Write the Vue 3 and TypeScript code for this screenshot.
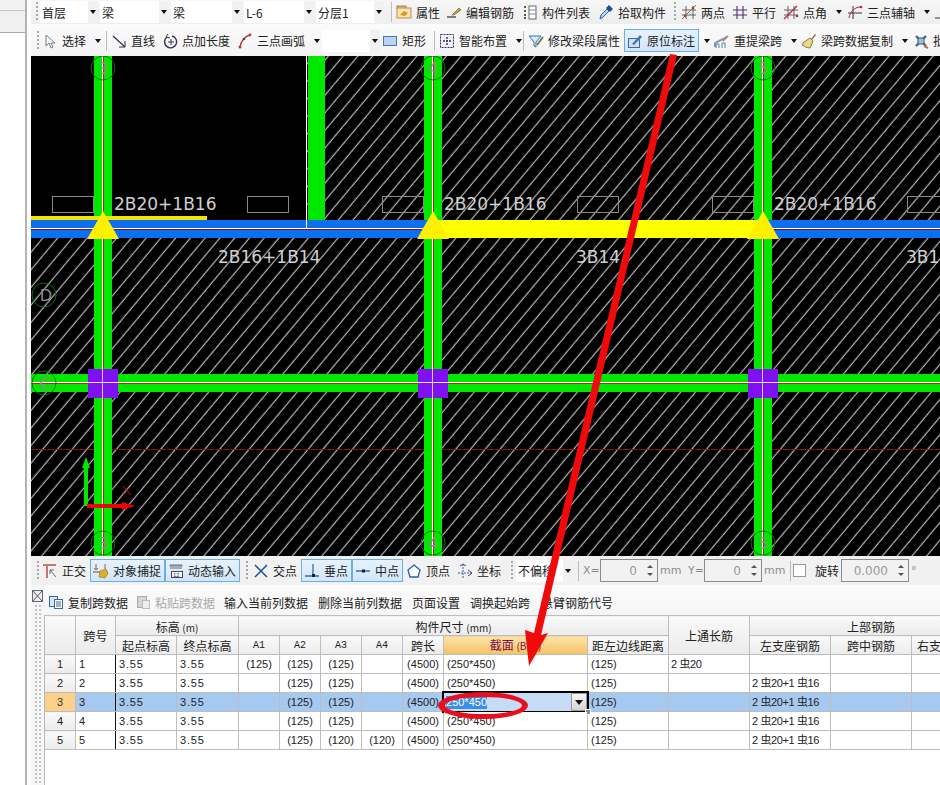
<script setup lang="ts">
// toolbar items are laid out in flow, w is the slot width of each item
interface BarItem {
  t: 'tool' | 'grip' | 'sep' | 'combo' | 'gap' | 'arrow' | 'text' | 'spin' | 'check'
  w: number
  icon?: string
  label?: string
  arrow?: boolean
  active?: boolean
  dark?: boolean
}

const tool = (w: number, icon: string, label: string, arrow = false, active = false): BarItem => ({ t: 'tool', w, icon, label, arrow, active })
const grip = (w: number): BarItem => ({ t: 'grip', w })
const sep = (w: number): BarItem => ({ t: 'sep', w })
const combo = (w: number, label = ''): BarItem => ({ t: 'combo', w, label })

const topBar: BarItem[] = [
  grip(7), combo(58, '首层'), combo(69, '梁'), combo(71, '梁'), combo(70, 'L-6'), combo(68, '分层1'), sep(10),
  tool(50, 'attr', '属性'), tool(76, 'edit', '编辑钢筋'), tool(76, 'list', '构件列表'), tool(70, 'pick', '拾取构件'),
  grip(13), tool(51, 'two', '两点'), tool(51, 'par', '平行'), tool(64, 'ang', '点角', true), tool(86, 'tri', '三点辅轴', true), tool(20, 'corner', ''),
]
const drawBar: BarItem[] = [
  grip(9), tool(59, 'sel', '选择', true), sep(10), tool(51, 'line', '直线'), tool(75, 'len', '点加长度'), tool(85, 'arc', '三点画弧', true),
  combo(58), tool(47, 'rect', '矩形'), sep(10), tool(79, 'smart', '智能布置', true), sep(10), tool(96, 'mod', '修改梁段属性'),
  tool(75, 'orig', '原位标注', false, true), { t: 'arrow', w: 15 }, tool(87, 'lift', '重提梁跨', true), tool(112, 'brush', '梁跨数据复制', true), tool(60, 'batch', '批量'),
]
const snapBar: BarItem[] = [
  grip(9), tool(48, 'orth', '正交'), tool(75, 'snap', '对象捕捉', false, true), tool(75, 'dyn', '动态输入', false, true),
  grip(13), tool(48, 'cross', '交点'), tool(51, 'perp', '垂点', false, true), tool(51, 'mid', '中点', false, true), { t: 'gap', w: 3 },
  tool(51, 'vert', '顶点'), tool(51, 'coord', '坐标'), grip(8), combo(57, '不偏移'), sep(6),
  { t: 'text', w: 19, label: 'X=' }, { t: 'spin', w: 58, label: '0' }, { t: 'text', w: 28, label: 'mm' },
  { t: 'text', w: 18, label: 'Y=' }, { t: 'spin', w: 58, label: '0' }, { t: 'text', w: 28, label: 'mm' },
  { t: 'check', w: 23 }, { t: 'text', w: 28, label: '旋转', dark: true }, { t: 'spin', w: 68, label: '0.000' }, { t: 'text', w: 14, label: '°' },
]
const bars = [
  { cls: 'bar-top', items: topBar },
  { cls: 'bar-draw', items: drawBar },
  { cls: 'bar-snap', items: snapBar },
]

const icons: Record<string, string> = {
  attr: '<rect x="1" y="2" width="9" height="3" fill="#d8c090" stroke="#a08050"/><rect x="1" y="4" width="14" height="10" fill="#f6e4b0" stroke="#b89050"/><path d="M4 11l4-4 4 2-3 3z" fill="#d89a20"/>',
  edit: '<path d="M1 13h9" stroke="#333" stroke-width="1.2"/><path d="M6 11l7-7 2 2-7 5z" fill="#c8a040" stroke="#6a5020" stroke-width=".6"/>',
  list: '<path d="M2 3h2M2 7h2M2 11h2M2 14h2" stroke="#555" stroke-width="2" stroke-dasharray="2 1"/><rect x="7" y="2" width="7" height="13" fill="#fff" stroke="#667"/><path d="M7 6h7M7 10h7" stroke="#889"/>',
  pick: '<path d="M2 15l1-4 6-6 2 2-6 6z" fill="#bcd8f4" stroke="#2a60a8"/><path d="M8 4l3-3 4 4-3 3z" fill="#1f4f9a"/>',
  two: '<path d="M5 2v13M12 2v13M1 6h14M1 11h14" stroke="#555" stroke-width=".9" fill="none"/><path d="M1 15L15 1" stroke="#7a7a20"/><circle cx="4" cy="12" r="1.3" fill="#c03030"/><circle cx="12" cy="4" r="1.3" fill="#c03030"/>',
  par: '<path d="M5 2v13M11 2v13M1 6h14M1 11h14" stroke="#503070" stroke-width="1.1" fill="none"/>',
  ang: '<path d="M5 2v13M11 2v13M1 6h14M1 11h14" stroke="#555" stroke-width=".9" fill="none"/><path d="M1 15L14 2" stroke="#c02040" stroke-width="1.2"/><circle cx="14" cy="12" r="1.3" fill="#c02040"/>',
  tri: '<path d="M6 2v13M1 9h14" stroke="#334" stroke-width="1"/><path d="M2 14C3 7 8 3 14 3" stroke="#c02040" fill="none"/><circle cx="14" cy="3" r="1.3" fill="#c02040"/>',
  corner: '<path d="M2 14h8" stroke="#334"/>',
  sel: '<path d="M4 2v11l3-3 2 5 2-1-2-4h4z" fill="#fff" stroke="#778"/>',
  line: '<path d="M2 3l12 11" stroke="#334" stroke-width="1.2"/><path d="M14 8v6H8" stroke="#334" fill="none"/>',
  len: '<path d="M5 4a6 6 0 1 0 5-1" stroke="#335" stroke-width="1.4" fill="none"/><path d="M9 6v6M6 9h6" stroke="#335"/><path d="M6 1l-2 3 4 1" stroke="#335" fill="none"/>',
  arc: '<path d="M3 14C4 8 8 3 13 2" stroke="#b03030" stroke-width="1.4" fill="none"/><circle cx="3" cy="14" r="1.5" fill="#b04040"/><circle cx="7" cy="6" r="1.2" fill="#445"/><circle cx="13" cy="2" r="1.4" fill="#b04040"/>',
  rect: '<rect x="1.5" y="3.5" width="13" height="9" fill="#bcd4f4" stroke="#4a74b8"/>',
  smart: '<rect x="1.5" y="1.5" width="13" height="13" fill="#eef" stroke="#334" stroke-dasharray="2 1"/><path d="M8 4v8M4 8h8" stroke="#334" stroke-width="1.4" stroke-dasharray="2 1"/>',
  mod: '<path d="M1 3h12L8 9v5l-2-1V9z" fill="#d4ecf8" stroke="#2a7aa8"/><path d="M9 12l6-8" stroke="#7a7a50" stroke-width="2"/>',
  orig: '<rect x="1.5" y="5.5" width="11" height="9" fill="#cfe0f0" stroke="#456a90"/><path d="M5 11l8-9 2 2-8 8z" fill="#4a78a8"/>',
  lift: '<path d="M1 14V10l4-2 4-2 5-3" stroke="#8a9ab8" stroke-width="2" fill="none"/><path d="M2 15v-4h3v4M8 15v-5h3v5" stroke="#6080a8" fill="none"/><path d="M9 8l4-4" stroke="#b88040" stroke-width="1.5"/>',
  brush: '<path d="M10 6l4-5 1 1-4 5z" fill="#8a7030"/><path d="M3 9l6-4 3 3-3 7C6 15 3 13 1 12z" fill="#e8d890" stroke="#907830"/>',
  batch: '<path d="M3 3l10 10M13 3L3 13" stroke="#3a6a98" stroke-width="2.4"/><rect x="5" y="5" width="6" height="6" fill="#a0c0d8" stroke="#456"/><path d="M11 13l4 2" stroke="#b08040" stroke-width="2"/>',
  orth: '<path d="M1 2h13M5 2v13" stroke="#c07870" stroke-width="2"/><path d="M8 7l6 7M8 7v4M8 7h4" stroke="#667" fill="none"/>',
  snap: '<path d="M3 1v6M3 7l-2-2M3 7l2-2M12 1v5" stroke="#a06030" fill="none"/><path d="M0 9h15" stroke="#8a4030"/><path d="M6 14l1-6 6-2 2 5-3 4z" fill="#d8b030" stroke="#907020" stroke-width=".6"/>',
  dyn: '<path d="M2 2h12v1H2zM2 5h12" stroke="#667" fill="none"/><rect x="3.5" y="8.5" width="11" height="6" fill="#fff" stroke="#445"/><text x="5" y="14" font-size="6" font-family="Liberation Sans, sans-serif" fill="#234">12</text>',
  cross: '<path d="M2 2l12 12M14 2L2 14" stroke="#1f4f90" stroke-width="1.5"/>',
  perp: '<path d="M1 13h14" stroke="#2a60a8" stroke-width="1.4"/><path d="M9 1v10" stroke="#2a60a8" stroke-width="1.2"/><rect x="8" y="11" width="3" height="3" fill="#123"/>',
  mid: '<path d="M1 8h14" stroke="#2a60a8" stroke-width="1.4"/><rect x="7" y="6.5" width="3" height="3" fill="#123"/>',
  vert: '<path d="M8 2l6 5-2 7H4L2 7z" fill="#fff" stroke="#2a60a8" stroke-width="1.3"/>',
  coord: '<path d="M6 1v14M1 10h14" stroke="#2a60a8" stroke-dasharray="2 1"/><path d="M3 3l3-2 3 2M11 7l4 3-4 3" stroke="#446" fill="none"/>',
  copy: '<rect x="1.5" y="2.5" width="8" height="10" fill="#d8e8f8" stroke="#3a6a9a"/><rect x="6.5" y="5.5" width="8" height="9" fill="#fff" stroke="#3a6a9a"/><path d="M8 8h5M8 10h5M8 12h5" stroke="#3a6a9a"/>',
  paste: '<rect x="2.5" y="2.5" width="9" height="11" fill="#d4d4d4" stroke="#aaa"/><rect x="7.5" y="6.5" width="7" height="8" fill="#eee" stroke="#bbb"/>',
}

interface Span { a1: string; a2: string; a3: string; a4: string; cont: string; left: string }
const spans: Span[] = [
  { a1: '(125)', a2: '(125)', a3: '(125)', a4: '', cont: '2 虫20', left: '' },
  { a1: '', a2: '(125)', a3: '(125)', a4: '', cont: '', left: '2 虫20+1 虫16' },
  { a1: '', a2: '(125)', a3: '(125)', a4: '', cont: '', left: '2 虫20+1 虫16' },
  { a1: '', a2: '(125)', a3: '(125)', a4: '', cont: '', left: '2 虫20+1 虫16' },
  { a1: '', a2: '(125)', a3: '(120)', a4: '(120)', cont: '', left: '2 虫20+1 虫16' },
]
const colWidths = [31, 40, 61, 62, 41, 41, 41, 41, 41, 144, 81, 81, 81, 81, 81]
const editRow = 2

// canvas contents, in page coordinates (the svg viewBox starts at 31,56)
const columns = [103, 433, 763]
const labelBoxes = [52, 247, 382, 577, 712, 907]
const axisNums = ['3', '4', '5']
</script>

<template>
  <div class="page">
    <aside class="side">
      <div class="side-a"></div>
      <div class="side-b"></div>
      <div class="side-c"></div>
    </aside>

    <main class="main">
      <template v-for="(bar, bi) in bars" :key="bar.cls">
        <div class="bar" :class="bar.cls">
          <template v-for="(it, i) in bar.items" :key="i">
            <div v-if="it.t === 'tool'" class="tool" :class="{ active: it.active }" :style="{ width: it.w + 'px' }">
              <svg class="ico" viewBox="0 0 16 16" v-html="icons[it.icon!]"></svg>
              <span v-if="it.label">{{ it.label }}</span>
              <i v-if="it.arrow" class="caret"></i>
            </div>
            <div v-else-if="it.t === 'grip'" class="grip" :style="{ width: it.w + 'px' }"></div>
            <div v-else-if="it.t === 'sep'" class="sep" :style="{ width: it.w + 'px' }"></div>
            <div v-else-if="it.t === 'gap'" :style="{ width: it.w + 'px' }"></div>
            <div v-else-if="it.t === 'arrow'" class="caret-slot" :style="{ width: it.w + 'px' }"><i class="caret"></i></div>
            <div v-else-if="it.t === 'combo'" class="combo" :style="{ width: it.w + 'px' }">
              <span>{{ it.label }}</span>
              <b class="combo-btn"><i class="caret"></i></b>
            </div>
            <div v-else-if="it.t === 'text'" class="lbl" :class="{ dark: it.dark }" :style="{ width: it.w + 'px' }">{{ it.label }}</div>
            <div v-else-if="it.t === 'spin'" class="spin" :style="{ width: it.w + 'px' }">
              <span>{{ it.label }}</span>
              <b class="spin-btns"><i class="up"></i><i class="down"></i></b>
            </div>
            <div v-else-if="it.t === 'check'" class="check-slot" :style="{ width: it.w + 'px' }"><i class="check"></i></div>
          </template>
        </div>

        <svg v-if="bi === 1" class="cad" viewBox="31 56 909 500" width="909" height="500">
          <defs>
            <pattern id="hatch" width="11.3" height="11.3" patternUnits="userSpaceOnUse" patternTransform="rotate(-50)">
              <line x1="0" y1="5" x2="11.3" y2="5" stroke="#f0f0f0" stroke-width="0.9" />
            </pattern>
          </defs>
          <rect x="31" y="56" width="909" height="500" fill="#000" />
          <rect x="31" y="56" width="909" height="500" fill="url(#hatch)" />
          <rect x="31" y="56" width="275" height="166" fill="#000" />

          <rect v-for="x in labelBoxes" :key="x" :x="x + 0.5" y="196.5" width="41" height="16" fill="none" stroke="#888" />

          <line x1="31" y1="449.5" x2="940" y2="449.5" stroke="#9a1010" stroke-dasharray="7 1" />

          <rect x="308" y="56" width="17" height="166" fill="#00e800" />
          <rect v-for="x in columns" :key="'c' + x" :x="x - 9" y="56" width="18" height="500" fill="#00e800" />
          <rect x="31" y="374" width="909" height="18" fill="#00e800" />

          <rect x="31" y="220" width="909" height="18" fill="#0a70f0" />
          <rect x="31" y="216" width="176" height="4" fill="#f4e400" />
          <line x1="306.5" y1="56" x2="306.5" y2="228" stroke="#fff" />

          <rect x="31" y="228" width="402" height="1" fill="#fff" />
          <rect x="31" y="229" width="402" height="1" fill="#8a1010" />
          <rect x="763" y="228" width="177" height="1" fill="#fff" />
          <rect x="763" y="229" width="177" height="1" fill="#8a1010" />
          <rect x="433" y="220" width="330" height="18" fill="#ffff00" />

          <rect x="31" y="382" width="909" height="1" fill="#fff" />
          <rect x="31" y="383" width="909" height="1" fill="#c02020" />
          <g v-for="x in columns" :key="'l' + x">
            <rect :x="x - 1" y="56" width="1" height="500" fill="#fff" />
            <rect :x="x" y="56" width="1" height="500" fill="#a03010" />
            <rect :x="x - 15" y="369" width="30" height="29" fill="#7f10f0" />
            <polygon :points="`${x},211 ${x + 16},239 ${x - 16},239`" fill="#ffef00" />
            <rect :x="x - 1" y="369" width="1" height="29" fill="#d8c8f8" />
          </g>
          <rect x="88" y="382" width="30" height="1" fill="#e8e0f8" />
          <rect x="418" y="382" width="30" height="1" fill="#e8e0f8" />
          <rect x="748" y="382" width="30" height="1" fill="#e8e0f8" />

          <g class="cad-label">
            <text x="114" y="210">2B20+1B16</text>
            <text x="444" y="210">2B20+1B16</text>
            <text x="774" y="210">2B20+1B16</text>
            <text x="218" y="263">2B16+1B14</text>
            <text x="576" y="263">3B14</text>
            <text x="906" y="263">3B14</text>
          </g>

          <g class="axis">
            <template v-for="(x, i) in columns" :key="'a' + x">
              <circle :cx="x" cy="68" r="12" />
              <text :x="x" y="74">{{ axisNums[i] }}</text>
              <circle :cx="x" cy="543" r="12" />
              <text :x="x" y="549">{{ axisNums[i] }}</text>
            </template>
            <circle cx="44" cy="295" r="12" />
            <text x="46" y="301">D</text>
            <circle cx="44" cy="383" r="12" />
            <text x="45" y="389">C</text>
          </g>

          <path d="M86 506V464" stroke="#00e800" stroke-width="4" />
          <polygon points="86,457 90,468 82,468" fill="#00e800" />
          <path d="M87 506H125" stroke="#f00000" stroke-width="4" />
          <polygon points="135,506 122,502 122,510" fill="#f00000" />
          <path d="M123 486l8 9M131 486l-8 9" stroke="#c01010" />
        </svg>
      </template>

      <section class="panel">
        <div class="dock">
          <svg class="dock-x" viewBox="0 0 11 12">
            <rect x="0.5" y="0.5" width="10" height="11" fill="#eee" stroke="#667" />
            <path d="M1 1l9 10M10 1L1 11" stroke="#556" />
          </svg>
          <div class="dock-dots"></div>
        </div>
        <div class="panel-main">
          <div class="panel-tools">
            <div class="ptool" style="width: 87px"><svg class="ico" viewBox="0 0 16 16" v-html="icons.copy"></svg><span>复制跨数据</span></div>
            <div class="ptool off" style="width: 89px"><svg class="ico" viewBox="0 0 16 16" v-html="icons.paste"></svg><span>粘贴跨数据</span></div>
            <div class="ptool" style="width: 94px">输入当前列数据</div>
            <div class="ptool" style="width: 94px">删除当前列数据</div>
            <div class="ptool" style="width: 58px">页面设置</div>
            <div class="ptool" style="width: 71px">调换起始跨</div>
            <div class="ptool" style="width: 90px">悬臂钢筋代号</div>
          </div>
          <div class="grid-wrap">
            <table class="grid">
              <colgroup><col v-for="(w, i) in colWidths" :key="i" :style="{ width: w + 'px' }" /></colgroup>
              <thead>
                <tr>
                  <th rowspan="2"></th>
                  <th rowspan="2">跨号</th>
                  <th colspan="2">标高 <small>(m)</small></th>
                  <th colspan="7">构件尺寸 <small>(mm)</small></th>
                  <th rowspan="2">上通长筋</th>
                  <th colspan="3">上部钢筋</th>
                </tr>
                <tr>
                  <th>起点标高</th><th>终点标高</th>
                  <th class="mono">A1</th><th class="mono">A2</th><th class="mono">A3</th><th class="mono">A4</th>
                  <th>跨长</th>
                  <th class="hot">截面 <small>(B*H)</small></th>
                  <th>距左边线距离</th>
                  <th>左支座钢筋</th><th>跨中钢筋</th><th class="clip">右支座钢筋</th>
                </tr>
              </thead>
              <tbody>
                <tr v-for="(s, r) in spans" :key="r" :class="{ sel: r === editRow }">
                  <th class="rowno" :class="{ hot: r === editRow }">{{ r + 1 }}</th>
                  <td class="frozen">{{ r + 1 }}</td>
                  <td class="lvl">3.55</td>
                  <td class="lvl">3.55</td>
                  <td class="ctr">{{ s.a1 }}</td>
                  <td class="ctr">{{ s.a2 }}</td>
                  <td class="ctr">{{ s.a3 }}</td>
                  <td class="ctr">{{ s.a4 }}</td>
                  <td class="ctr">(4500)</td>
                  <td class="sec">
                    <template v-if="r !== editRow">(250*450)</template>
                    <div v-else class="editor">
                      <span class="picked">250*450</span>
                      <b class="drop"><i class="caret"></i></b>
                      <i class="handle"></i>
                    </div>
                  </td>
                  <td>(125)</td>
                  <td class="rebar">{{ s.cont }}</td>
                  <td class="rebar">{{ s.left }}</td>
                  <td></td>
                  <td></td>
                </tr>
              </tbody>
            </table>
          </div>
        </div>
      </section>
    </main>

    <svg class="marks" viewBox="0 0 940 785" width="940" height="785">
      <polygon points="670,54 677,55 541,635 548,633 529,666 525,630 534,633" fill="#f00a0a" />
      <path
        d="M438 705.5a45 13.5 0 1 0 90 0a45 13.5 0 1 0 -90 0zM445 705.5a38 8.5 0 1 1 77 0a38 8.5 0 1 1 -77 0z"
        fill="#e8101c"
        fill-rule="evenodd"
      />
    </svg>
  </div>
</template>

<style>
html,
body {
  margin: 0;
  background: #fff;
}
</style>

<style scoped>
.page {
  position: relative;
  display: flex;
  width: 940px;
  height: 785px;
  overflow: hidden;
  background: #fff;
  font-family: "Noto Sans CJK SC", "Liberation Sans", sans-serif;
  font-size: 12px;
  color: #222;
}

.side {
  flex: 0 0 25px;
  display: flex;
  flex-direction: column;
  border-right: 2px solid #b4b4b4;
}
.side-a {
  height: 10px;
  background: #f2f2f2;
  border-bottom: 1px solid #c4c4c4;
}
.side-b {
  height: 21px;
  background: #f0f0f0;
  border-bottom: 1px solid #a8a8a8;
}
.side-c {
  flex: 1;
  background: #fff;
}

.main {
  margin-left: 4px;
  width: 909px;
  flex-shrink: 0;
  display: flex;
  flex-direction: column;
  overflow: hidden;
}

.bar {
  display: flex;
  align-items: center;
  flex-shrink: 0;
  box-sizing: border-box;
  padding-left: 2px;
  white-space: nowrap;
}
.bar-top {
  height: 24px;
  background: linear-gradient(#f6f6f6, #eeeeee);
}
.bar-draw {
  height: 32px;
  padding-top: 1px;
  background: linear-gradient(#fbfbfb, #f3f3f3);
}
.bar-snap {
  height: 29px;
  background: #f1f1f1;
}

.tool {
  flex-shrink: 0;
  box-sizing: border-box;
  display: flex;
  align-items: center;
  gap: 4px;
  height: 23px;
}
.tool.active {
  border: 1px solid #6aaee6;
  padding-left: 2px;
  background: linear-gradient(#e6f2fc, #d2e6f8);
}
.ico {
  width: 16px;
  height: 16px;
  flex-shrink: 0;
}
.caret {
  display: block;
  width: 0;
  height: 0;
  margin-left: 5px;
  border: 3px solid transparent;
  border-top: 4px solid #111;
  border-bottom: 0;
}
.caret-slot {
  flex-shrink: 0;
}
.grip {
  flex-shrink: 0;
  height: 20px;
  background: repeating-linear-gradient(to bottom, #a8a8a8 0 2px, transparent 2px 4px) no-repeat center / 2px 100%;
}
.sep {
  flex-shrink: 0;
  height: 20px;
  background: linear-gradient(#bcbcbc, #bcbcbc) no-repeat center / 1px 100%;
}
.combo {
  flex-shrink: 0;
  box-sizing: border-box;
  display: flex;
  align-items: center;
  justify-content: space-between;
  height: 22px;
  margin-right: 2px;
  padding-left: 2px;
  background: #fff;
  overflow: hidden;
}
.combo-btn {
  flex-shrink: 0;
  display: flex;
  align-items: center;
  justify-content: center;
  width: 10px;
  height: 100%;
  background: #f1f1f1;
}
.combo-btn .caret {
  margin: 0;
}
.bar-snap .combo .combo-btn {
  margin-left: -8px;
}
.lbl {
  flex-shrink: 0;
  padding-left: 2px;
  box-sizing: border-box;
  color: #8a8a8a;
  font-family: "DejaVu Sans", sans-serif;
  font-size: 11px;
}
.lbl.dark {
  color: #222;
  font-family: "Noto Sans CJK SC", sans-serif;
  font-size: 12px;
}
.spin {
  flex-shrink: 0;
  box-sizing: border-box;
  display: flex;
  align-items: center;
  justify-content: flex-end;
  height: 23px;
  border: 1px solid #8c8c8c;
  background: #f2f2f2;
  color: #999;
  font-family: "DejaVu Sans", sans-serif;
}
.spin span {
  padding-right: 7px;
}
.spin-btns {
  display: flex;
  flex-direction: column;
  justify-content: center;
  gap: 5px;
  width: 13px;
  height: 100%;
}
.spin-btns i {
  width: 0;
  height: 0;
  margin-left: 3px;
  border: 3px solid transparent;
}
.spin-btns .up {
  border-top: 0;
  border-bottom: 3px solid #555;
}
.spin-btns .down {
  border-bottom: 0;
  border-top: 3px solid #555;
}
.check-slot {
  flex-shrink: 0;
  box-sizing: border-box;
  height: 20px;
  padding-left: 3px;
  display: flex;
  align-items: center;
  background: linear-gradient(#bcbcbc, #bcbcbc) no-repeat left / 1px 100%;
}
.check {
  display: block;
  width: 11px;
  height: 11px;
  border: 1px solid #999;
  background: #fff;
}

.cad {
  display: block;
  flex-shrink: 0;
}
.cad-label text {
  font-family: "DejaVu Sans", sans-serif;
  font-size: 17px;
  fill: #cfcfcf;
}
.axis circle {
  fill: none;
  stroke: #0c6e0c;
}
.axis text {
  font-family: "DejaVu Sans", sans-serif;
  font-size: 16px;
  fill: #8c8c8c;
  text-anchor: middle;
}

.panel {
  flex: 1;
  display: flex;
  min-height: 0;
  background: #fff;
}
.dock {
  flex: 0 0 13px;
  display: flex;
  flex-direction: column;
  background: #f6f6f6;
}
.dock-x {
  display: block;
  width: 11px;
  height: 12px;
  margin: 5px 0 0 1px;
  flex-shrink: 0;
}
.dock-dots {
  flex: 1;
  margin: 2px 2px 0 3px;
  background: radial-gradient(circle, #c4c4c4 1px, transparent 1.2px) 0 0 / 4px 4px;
}
.panel-main {
  flex: 1;
  min-width: 0;
  display: flex;
  flex-direction: column;
}
.panel-tools {
  flex: 0 0 31px;
  display: flex;
  align-items: center;
  padding: 3px 0 0 4px;
  background: linear-gradient(#fbfbfb, #f5f5f5);
  white-space: nowrap;
  box-sizing: border-box;
}
.ptool {
  flex-shrink: 0;
  display: flex;
  align-items: center;
  gap: 4px;
}
.ptool.off {
  color: #a8a8a8;
}

.grid-wrap {
  flex: 1;
  overflow: hidden;
  border-left: 1px solid #b8b8b8;
  border-top: 1px solid #bdbdbd;
  margin-top: -1px;
}
.grid {
  table-layout: fixed;
  width: 948px;
  border-collapse: collapse;
  margin-top: -1px;
  margin-left: -1px;
}
.grid th,
.grid td {
  box-sizing: border-box;
  height: 19px;
  padding: 0;
  border: 1px solid #bdbdbd;
  line-height: 17px;
  overflow: hidden;
  white-space: nowrap;
}
.grid thead tr:first-child th {
  height: 20px;
}
.grid thead tr:first-child th[colspan] {
  padding-top: 2px;
  line-height: 15px;
}
.grid th {
  font-weight: normal;
  font-size: 12px;
  text-align: center;
  color: #222;
  background: linear-gradient(#fafafa, #ebebeb);
}
.grid small {
  font-size: 10px;
}
.grid th.mono {
  font-family: "Liberation Mono", monospace;
  font-size: 10px;
}
.grid th.hot {
  color: #7a0a4a;
  background: linear-gradient(#fde4ae, #f4c262);
}
.grid th.clip {
  text-align: left;
  padding-left: 5px;
}
.grid td {
  padding-left: 3px;
  font-family: "Liberation Sans", "Noto Sans CJK SC", sans-serif;
  font-size: 11px;
  color: #222;
  background: #fff;
}
.grid th.rowno {
  font-family: "Liberation Sans", sans-serif;
  font-size: 11px;
}
.grid th.rowno.hot {
  color: #333;
  background: #fbd08a;
}
.grid td.frozen {
  border-right: 1px solid #111;
}
.grid td.lvl {
  letter-spacing: 0.8px;
}
.grid td.ctr {
  padding-left: 0;
  text-align: center;
}
.grid td.rebar {
  padding-left: 2px;
  letter-spacing: -0.4px;
}
.grid tr.sel td {
  background: #a6c9f0;
}
.grid td.sec {
  position: relative;
  overflow: visible;
}
.editor {
  position: absolute;
  left: -2px;
  top: -2px;
  right: -2px;
  bottom: -2px;
  display: flex;
  align-items: center;
  padding-left: 2px;
  border: 2px solid #000;
  background: #c6dcf6;
}
.picked {
  color: #fff;
  background: #3a8ee6;
  line-height: 13px;
}
.drop {
  position: absolute;
  right: 0;
  top: 0;
  bottom: 0;
  width: 16px;
  display: flex;
  align-items: center;
  justify-content: center;
  background: linear-gradient(#f6f6f6, #d4d4d4);
  border: 1px solid #999;
  box-sizing: border-box;
}
.drop .caret {
  margin: 0;
  border-width: 4px;
  border-top-width: 5px;
  border-bottom: 0;
}
.handle {
  position: absolute;
  right: -4px;
  bottom: -4px;
  width: 4px;
  height: 4px;
  background: #8a8a8a;
  border: 1px solid #fff;
}

.marks {
  position: absolute;
  left: 0;
  top: 0;
  pointer-events: none;
}
</style>
